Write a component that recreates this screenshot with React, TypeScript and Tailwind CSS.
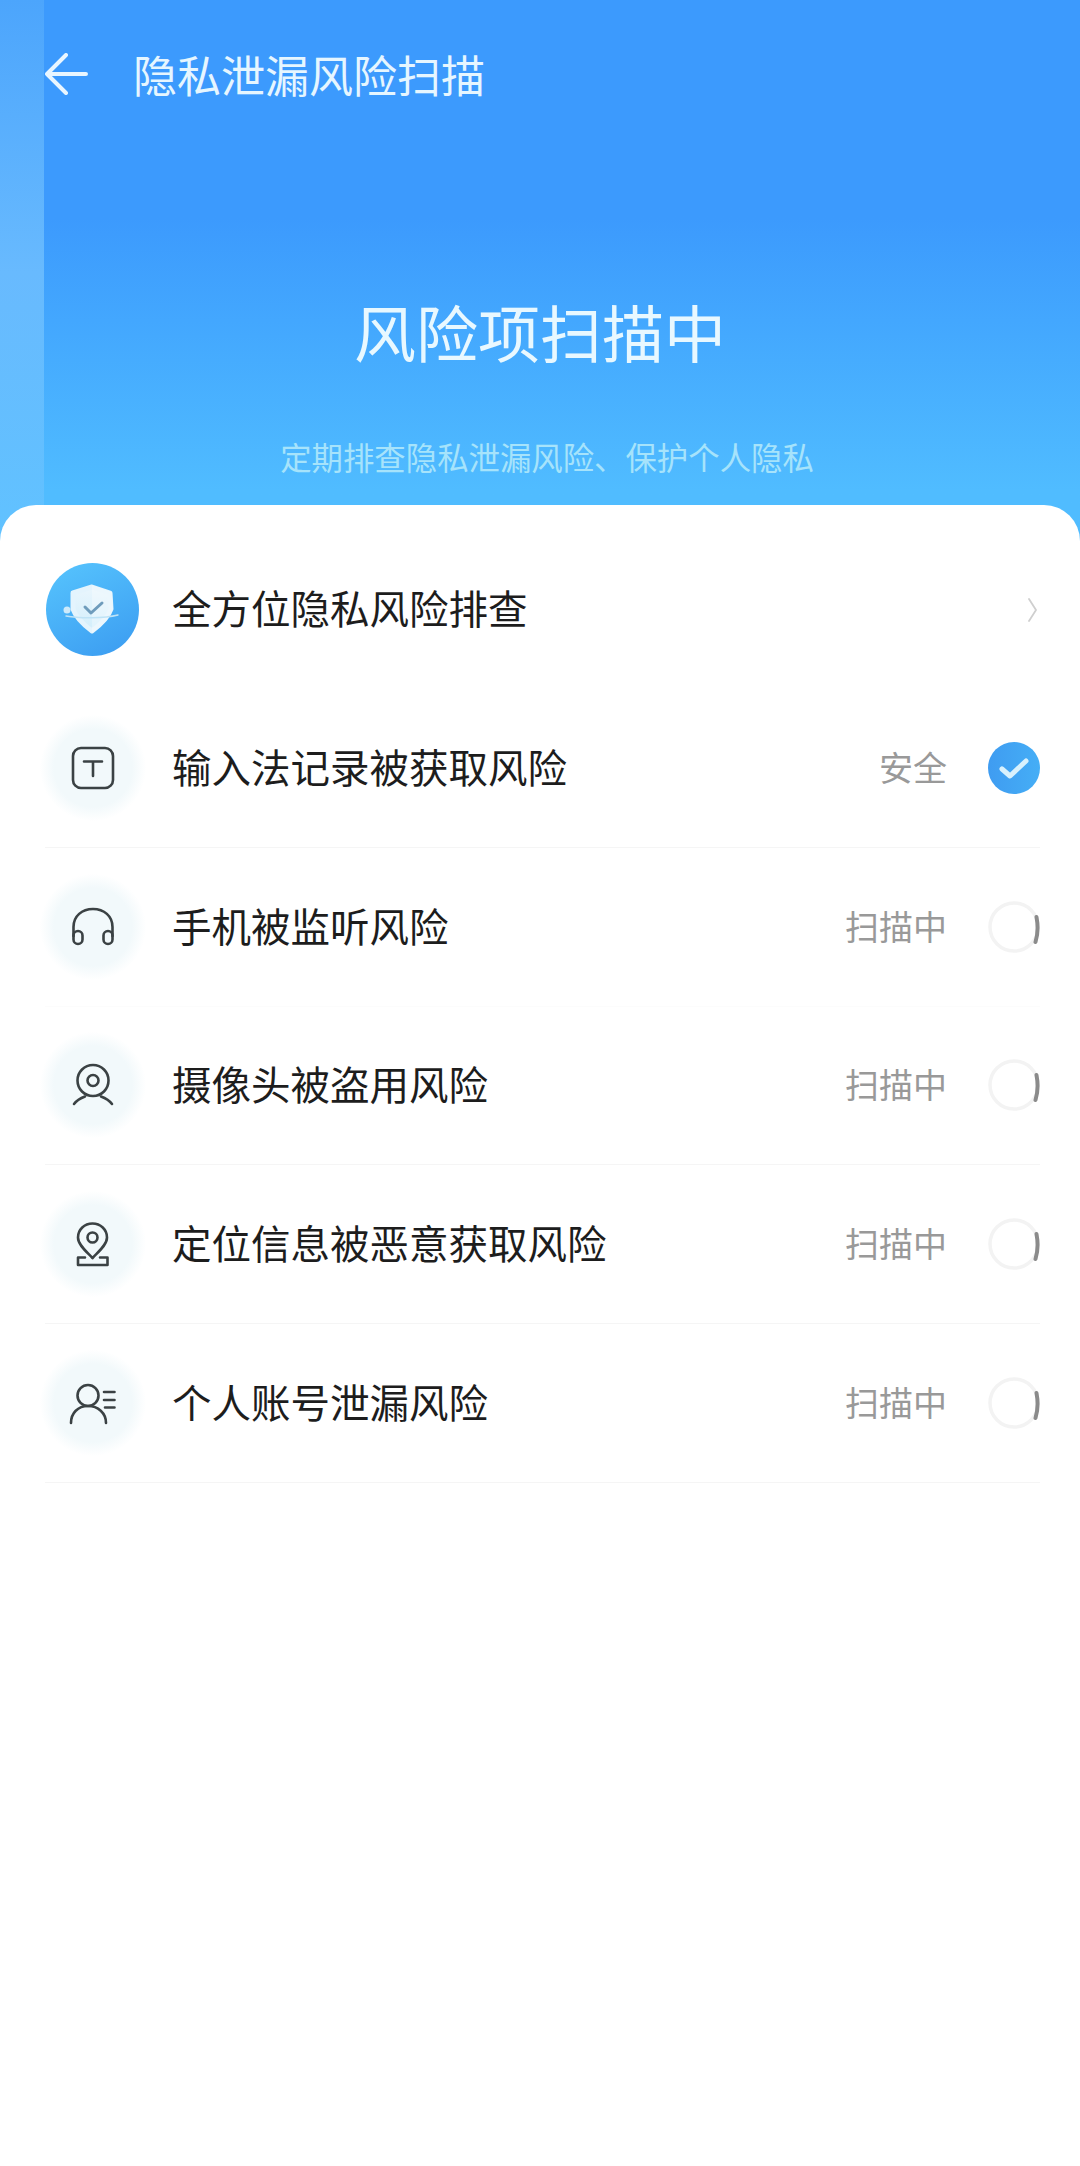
import React from 'react';

const FONT = 'font-["Noto_Sans_CJK_SC","Noto_Sans",sans-serif]';

const ShieldIcon = () => (
    <svg width="93" height="93" viewBox="0 0 93 93" className="shrink-0">
        <defs>
            <linearGradient id="disc" x1="0.2" y1="0" x2="0.7" y2="1">
                <stop offset="0" stopColor="#55c2fd" />
                <stop offset="1" stopColor="#3d9ff2" />
            </linearGradient>
            <linearGradient id="shield" x1="0" y1="0" x2="0" y2="1">
                <stop offset="0" stopColor="#eaf6fd" />
                <stop offset="1" stopColor="#d2eefb" />
            </linearGradient>
        </defs>
        <circle cx="46.5" cy="46.5" r="46.5" fill="url(#disc)" />
        <circle cx="21" cy="47" r="3.5" fill="#cdeafb" />
        <path d="M46 24 L64 30 L65 46 C62 55 54 62 46 68 C38 62 30 55 27 46 L27 30 Z" fill="url(#shield)" stroke="#e4f4fd" strokeWidth="5" strokeLinejoin="round" />
        <path d="M46 22 L66 29 L67 46 C64 56 55 64 46 70 Z" fill="#ffffff" fillOpacity="0.3" />
        <path d="M39 44 L45 50 L56 40" fill="none" stroke="#6f9cbc" strokeWidth="3" strokeLinecap="round" strokeLinejoin="round" />
        <path d="M20 53 C34 55.5 58 55.5 72 52" fill="none" stroke="#bfe3f6" strokeWidth="1.4" strokeLinecap="round" />
    </svg>
);

const STROKE = { fill: 'none', stroke: '#3b4244', strokeWidth: 2.6, strokeLinecap: 'round', strokeLinejoin: 'round' } as const;

const TextIcon = () => (
    <svg width="50" height="50" viewBox="0 0 50 50" {...STROKE}>
        <rect x="5" y="5" width="40" height="40" rx="8" />
        <path d="M16 18.5 H34 M25 18.5 V33" />
    </svg>
);

const HeadphoneIcon = () => (
    <svg width="50" height="50" viewBox="0 0 50 50" {...STROKE}>
        <path d="M5.5 34 V25 C5.5 14 14 7 25 7 C36 7 44.5 14 44.5 25 V34" />
        <rect x="5.5" y="29" width="9" height="13" rx="4.5" />
        <rect x="35.5" y="29" width="9" height="13" rx="4.5" />
    </svg>
);

const CameraIcon = () => (
    <svg width="50" height="50" viewBox="0 0 50 50" {...STROKE}>
        <circle cx="25" cy="20.5" r="15.5" />
        <circle cx="25" cy="20.5" r="5.5" />
        <path d="M6 44 C9 40 13 38 17 36.5 M44 44 C41 40 37 38 33 36.5" />
    </svg>
);

const PinIcon = () => (
    <svg width="50" height="50" viewBox="0 0 50 50" {...STROKE}>
        <path d="M24.5 39 C19 33 10 26 10 18.5 C10 10.5 16.5 4.5 24.5 4.5 C32.5 4.5 39 10.5 39 18.5 C39 26 30 33 24.5 39 Z" />
        <circle cx="24.5" cy="18.5" r="5" />
        <path d="M17 38.5 H10 V46 H39.5 V38.5 H32" />
    </svg>
);

const PersonIcon = () => (
    <svg width="50" height="50" viewBox="0 0 50 50" {...STROKE}>
        <circle cx="20" cy="17.5" r="10.5" />
        <path d="M3 45 C3 35 10 28 20 28 C30 28 38 35 38 45" />
        <path d="M36 14 H46.5 M36 22 H46.5 M37 29.5 H46.5" />
    </svg>
);

const CheckBadge = () => (
    <svg width="52" height="52" viewBox="0 0 52 52" className="shrink-0">
        <defs>
            <linearGradient id="badge" x1="0" y1="0.5" x2="1" y2="0.5">
                <stop offset="0" stopColor="#3f9cf1" />
                <stop offset="1" stopColor="#45aef6" />
            </linearGradient>
        </defs>
        <circle cx="26" cy="26" r="26" fill="url(#badge)" />
        <path d="M14 27 L22 34 L38 19" fill="none" stroke="#d8f1fd" strokeWidth="5" strokeLinecap="round" strokeLinejoin="round" />
    </svg>
);

const Spinner = () => (
    <svg width="52" height="52" viewBox="0 0 52 52" className="shrink-0" fill="none">
        <circle cx="26" cy="26" r="24" stroke="#f3f3f3" strokeWidth="3.5" />
        <path d="M48.5 16 C50 24 50 33 47.5 41" stroke="#8b8b8b" strokeWidth="4" strokeLinecap="round" />
    </svg>
);

const rows = [
    { icon: <TextIcon />, label: '输入法记录被获取风险', status: '安全', done: true, line: 'border-[#f5f5f5]' },
    { icon: <HeadphoneIcon />, label: '手机被监听风险', status: '扫描中', done: false, line: 'border-[#fcfcfc]' },
    { icon: <CameraIcon />, label: '摄像头被盗用风险', status: '扫描中', done: false, line: 'border-[#f5f5f5]' },
    { icon: <PinIcon />, label: '定位信息被恶意获取风险', status: '扫描中', done: false, line: 'border-[#f5f5f5]' },
    { icon: <PersonIcon />, label: '个人账号泄漏风险', status: '扫描中', done: false, line: 'border-[#f5f5f5]' },
];

export default function App() {
    return (
        <div className={`w-[1080px] h-[2166px] overflow-hidden bg-white ${FONT}`}>
            {/* Blue header */}
            <div className="relative h-[545px] bg-gradient-to-b from-[#3c9afd] from-40% to-[#50bcff] to-90%">
                <div className="absolute left-0 top-0 bottom-0 w-[44px] bg-gradient-to-b from-[#4ca5fc] via-[#68bafe] to-[#60c2ff]" />
                <div className="relative flex items-center pt-[53px] pl-[45px]">
                    <svg width="43" height="42" viewBox="0 0 43 42" fill="none" stroke="#e9f6ff" strokeWidth="4" strokeLinecap="round" strokeLinejoin="round">
                        <path d="M2 21 H41 M21 2 L2 21 L21 40" />
                    </svg>
                    <span className="ml-[45px] text-[44px] leading-[42px] text-[#e6f6ff]">隐私泄漏风险扫描</span>
                </div>
                <h1 className="relative mt-[205px] text-center text-[62px] leading-[62px] font-normal text-[#e8f8ff]">风险项扫描中</h1>
                <p className="relative mt-[79px] pl-[14px] text-center text-[31.4px] leading-[32px] text-[#a6e3fb]">定期排查隐私泄漏风险、保护个人隐私</p>
            </div>

            {/* White card */}
            <div className="relative -mt-[40px] rounded-t-[36px] bg-white pt-[25px]">
                <div className="flex h-[159px] items-center pl-[46px] pr-[43px]">
                    <ShieldIcon />
                    <span className="ml-[33px] flex-1 pb-[5px] text-[39.5px] text-[#1d1d1d]">全方位隐私风险排查</span>
                    <svg width="9" height="24" viewBox="0 0 9 24" fill="none" stroke="#cfcfcf" strokeWidth="1.8" strokeLinecap="round" strokeLinejoin="round">
                        <path d="M1 1 L8 12 L1 23" />
                    </svg>
                </div>

                {rows.map((row) => (
                    <div key={row.label} className={`ml-[45px] mr-[40px] flex h-[158.75px] items-center border-b ${row.line}`}>
                        <div className="-ml-[5px] flex h-[106px] w-[106px] shrink-0 items-center justify-center rounded-full bg-[radial-gradient(circle,#f2f9fb_52%,#ffffff_71%)]">
                            {row.icon}
                        </div>
                        <span className="ml-[26px] flex-1 pb-[5px] text-[39.5px] text-[#1d1d1d]">{row.label}</span>
                        <span className="mr-[41px] pb-[3px] text-[34px] text-[#999999]">{row.status}</span>
                        {row.done ? <CheckBadge /> : <Spinner />}
                    </div>
                ))}
            </div>
        </div>
    );
}
